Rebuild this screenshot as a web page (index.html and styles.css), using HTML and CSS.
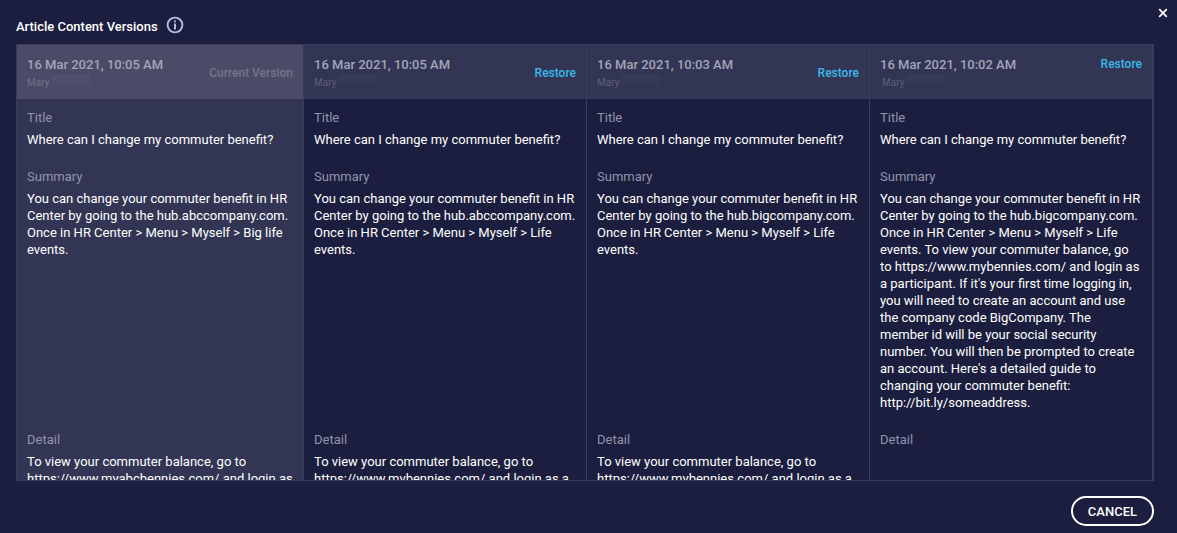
FILE: index.html
```html
<!DOCTYPE html>
<html lang="en">
<head>
<meta charset="utf-8">
<meta name="viewport" content="width=device-width, initial-scale=1">
<title>Article Content Versions</title>
<link rel="stylesheet" href="styles.css">
</head>
<body>
<main class="dialog">
  <header class="dialog-header">
    <h1 class="dialog-title">Article Content Versions</h1>
    <svg class="info-icon" viewBox="0 0 18 18" role="img" aria-label="Information">
      <circle cx="9" cy="9" r="7.4" fill="none" stroke="currentColor" stroke-width="1.9"/>
      <path d="M8 4.5h2v1.8H8zM8 7.4h2v6H8z" fill="currentColor"/>
    </svg>
    <button class="close-button" type="button" aria-label="Close">
      <svg class="close-icon" viewBox="0 0 10 10" aria-hidden="true"><path d="M1.2 1.2l7.6 7.6M8.8 1.2L1.2 8.8" fill="none" stroke="currentColor" stroke-width="1.7"/></svg>
    </button>
  </header>

  <div class="versions">
    <article class="version version-current">
      <header class="version-header">
        <div class="version-meta">
          <h2 class="version-date">16 Mar 2021, 10:05 AM</h2>
          <p class="version-author">Mary<span class="redacted"></span></p>
        </div>
        <span class="version-state">Current Version</span>
      </header>
      <section class="field"><h3 class="field-label">Title</h3><p class="field-value">Where can I change my commuter benefit?</p></section>
      <section class="field"><h3 class="field-label">Summary</h3><p class="field-value">You can change your commuter benefit in HR Center by going to the hub.abccompany.com. Once in HR Center &gt; Menu &gt; Myself &gt; Big life events.</p></section>
      <section class="field"><h3 class="field-label">Detail</h3><p class="field-value">To view your commuter balance, go to https://www.myabcbennies.com/ and login as</p></section>
    </article>

    <article class="version">
      <header class="version-header">
        <div class="version-meta">
          <h2 class="version-date">16 Mar 2021, 10:05 AM</h2>
          <p class="version-author">Mary<span class="redacted"></span></p>
        </div>
        <button class="restore-button" type="button">Restore</button>
      </header>
      <section class="field"><h3 class="field-label">Title</h3><p class="field-value">Where can I change my commuter benefit?</p></section>
      <section class="field"><h3 class="field-label">Summary</h3><p class="field-value">You can change your commuter benefit in HR Center by going to the hub.abccompany.com. Once in HR Center &gt; Menu &gt; Myself &gt; Life events.</p></section>
      <section class="field"><h3 class="field-label">Detail</h3><p class="field-value">To view your commuter balance, go to https://www.mybennies.com/ and login as a</p></section>
    </article>

    <article class="version">
      <header class="version-header">
        <div class="version-meta">
          <h2 class="version-date">16 Mar 2021, 10:03 AM</h2>
          <p class="version-author">Mary<span class="redacted"></span></p>
        </div>
        <button class="restore-button" type="button">Restore</button>
      </header>
      <section class="field"><h3 class="field-label">Title</h3><p class="field-value">Where can I change my commuter benefit?</p></section>
      <section class="field"><h3 class="field-label">Summary</h3><p class="field-value">You can change your commuter benefit in HR Center by going to the hub.bigcompany.com. Once in HR Center &gt; Menu &gt; Myself &gt; Life events.</p></section>
      <section class="field"><h3 class="field-label">Detail</h3><p class="field-value">To view your commuter balance, go to https://www.mybennies.com/ and login as a</p></section>
    </article>

    <article class="version version-oldest">
      <header class="version-header">
        <div class="version-meta">
          <h2 class="version-date">16 Mar 2021, 10:02 AM</h2>
          <p class="version-author">Mary<span class="redacted"></span></p>
        </div>
        <button class="restore-button" type="button">Restore</button>
      </header>
      <section class="field"><h3 class="field-label">Title</h3><p class="field-value">Where can I change my commuter benefit?</p></section>
      <section class="field"><h3 class="field-label">Summary</h3><p class="field-value">You can change your commuter benefit in HR Center by going to the hub.bigcompany.com. Once in HR Center &gt; Menu &gt; Myself &gt; Life events. To view your commuter balance, go to https://www.mybennies.com/ and login as a participant. If it's your first time logging in, you will need to create an account and use the company code BigCompany. The member id will be your social security number. You will then be prompted to create an account. Here's a detailed guide to changing your commuter benefit: http://bit.ly/someaddress.</p></section>
      <section class="field"><h3 class="field-label">Detail</h3></section>
    </article>
  </div>

  <footer class="dialog-footer">
    <button class="cancel-button" type="button">CANCEL</button>
  </footer>
</main>
</body>
</html>
```

FILE: styles.css
```css
* {
  box-sizing: border-box;
}

body {
  margin: 0;
  background: #1b1e3e;
  color: #fff;
  font: 13px/17px Roboto, "Liberation Sans", sans-serif;
}

h1, h2, h3, p {
  margin: 0;
}

button {
  border: 0;
  background: none;
  color: inherit;
  font: inherit;
  cursor: pointer;
}

.dialog {
  display: flex;
  flex-direction: column;
  height: 100vh;
}

.dialog-header {
  display: flex;
  flex: none;
  align-items: flex-start;
  gap: 8px;
  height: 44px;
  padding: 8px 9px 0 16px;
}

.dialog-title {
  padding-top: 10px;
  font-size: 13px;
  font-weight: 500;
}

.info-icon {
  width: 18px;
  height: 18px;
  margin-top: 8px;
  color: #b6bbd6;
}

.close-button {
  display: flex;
  margin-left: auto;
  padding: 0;
}

.close-icon {
  width: 10px;
  height: 10px;
}

.versions {
  display: grid;
  flex: 1;
  grid-template-columns: 287fr 283fr 283fr 283fr;
  grid-template-rows: 54px auto auto auto;
  min-height: 0;
  margin: 0 23px 0 16px;
  overflow: hidden;
  border: 1px solid #3a3c5b;
}

.version {
  display: grid;
  grid-row: 1 / span 4;
  grid-template-rows: subgrid;
  border-right: 1px solid #3a3c5b;
}

.version-current {
  background: #323554;
}

.version-header {
  display: flex;
  align-items: center;
  justify-content: space-between;
  padding: 11px 10px 8px;
  background: #323554;
}

.version-current .version-header {
  background: #4a4c67;
}

.version-date {
  color: #a3a5b8;
  font-size: 13px;
  font-weight: 500;
}

.version-author {
  display: flex;
  align-items: center;
  gap: 2px;
  height: 18px;
  color: #5c5e7a;
  font-size: 10px;
}

.version-current .version-author {
  color: #707289;
}

.redacted {
  width: 39px;
  height: 14px;
  background: linear-gradient(#383b59, #323554);
}

.version-current .redacted {
  background: linear-gradient(#505270, #4a4c67);
}

.version-state {
  color: #74768c;
  font-size: 12px;
  font-weight: 500;
}

.restore-button {
  padding: 0;
  color: #3bb8ea;
  font-size: 12px;
  font-weight: 500;
}

.version-oldest .restore-button {
  align-self: flex-start;
}

.version-oldest .version-author {
  padding-left: 2px;
}

.field {
  padding: 10px;
}

.field-label {
  margin-bottom: 5px;
  color: #9294aa;
  font-size: 13px;
  font-weight: 400;
}

.dialog-footer {
  display: flex;
  flex: none;
  justify-content: flex-end;
  padding: 15px 23px 7px;
}

.cancel-button {
  height: 30px;
  padding: 0 15px;
  border: 2px solid #fff;
  border-radius: 15px;
  font-weight: 500;
}
```
